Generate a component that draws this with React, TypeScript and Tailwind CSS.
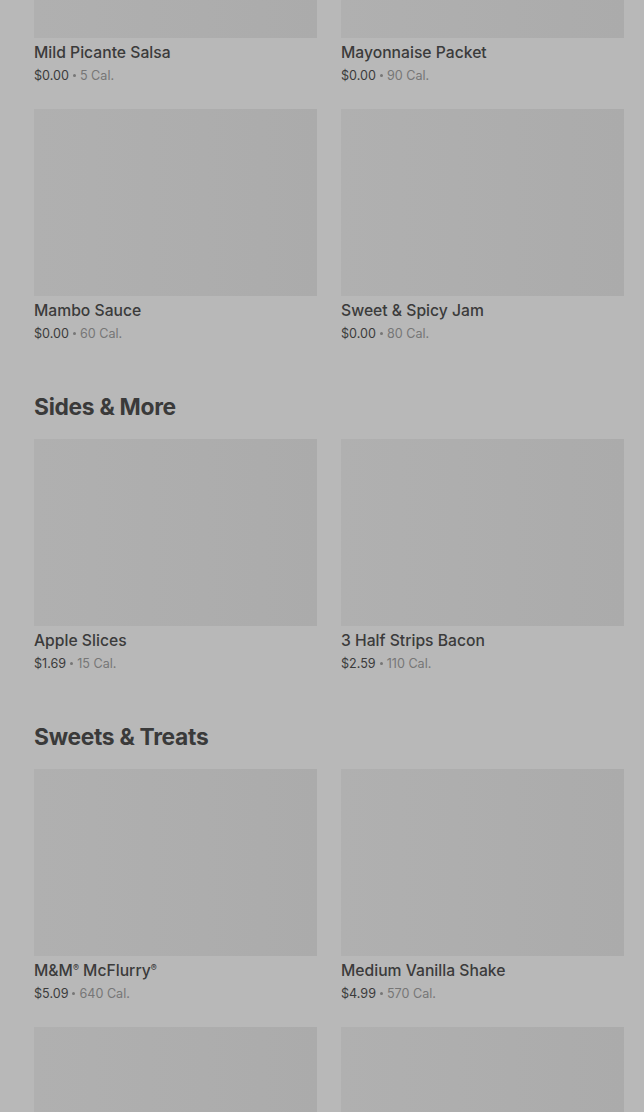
import React from 'react';

type Item = { name: React.ReactNode; price: string; cal: string };

const sections: { title?: string; items: Item[] }[] = [
  {
    items: [
      { name: 'Mild Picante Salsa', price: '$0.00', cal: '5 Cal.' },
      { name: 'Mayonnaise Packet', price: '$0.00', cal: '90 Cal.' },
      { name: 'Mambo Sauce', price: '$0.00', cal: '60 Cal.' },
      { name: 'Sweet & Spicy Jam', price: '$0.00', cal: '80 Cal.' },
    ],
  },
  {
    title: 'Sides & More',
    items: [
      { name: 'Apple Slices', price: '$1.69', cal: '15 Cal.' },
      { name: '3 Half Strips Bacon', price: '$2.59', cal: '110 Cal.' },
    ],
  },
  {
    title: 'Sweets & Treats',
    items: [
      {
        name: (
          <>
            M&M<sup className="text-[9px] -top-[5px]">®</sup> McFlurry<sup className="text-[9px] -top-[5px]">®</sup>
          </>
        ),
        price: '$5.09',
        cal: '640 Cal.',
      },
      { name: 'Medium Vanilla Shake', price: '$4.99', cal: '570 Cal.' },
      { name: '', price: '', cal: '' },
      { name: '', price: '', cal: '' },
    ],
  },
];

const Card: React.FC<{ item: Item }> = ({ item }) => (
  <div className="flex flex-col">
    <div className="h-[187px] bg-gradient-to-r from-[#b0b0b0] to-[#ababab]" />
    {item.price && (
      <>
        <div className="mt-[5px] h-5 leading-5 text-[15.7px] font-medium text-[#3b3b3b]">{item.name}</div>
        <div className="mt-[3px] h-[19px] leading-[19px] text-[12.6px] text-[#767676] flex items-center">
          <span className="text-[#3b3b3b]">{item.price}</span>
          <span className="mx-[4px] inline-block w-[3px] h-[3px] rounded-full bg-[#767676]" />
          {item.cal}
        </div>
      </>
    )}
  </div>
);

export default function App() {
  return (
    <div
      className="h-[1112px] w-[644px] overflow-hidden bg-[#b8b8b8]"
      style={{ fontFamily: 'Inter, "Noto Sans", sans-serif' }}
    >
      <div className="-mt-[149px] pl-[34px] pr-[20px]">
        {sections.map((s, i) => (
          <section key={i} className={s.title ? 'mt-[50px]' : ''}>
            {s.title && (
              <h2 className="h-7 leading-7 mb-[18px] text-[22.8px] font-bold text-[#3a3a3a] tracking-[-0.3px]">{s.title}</h2>
            )}
            <div className="grid grid-cols-2 gap-x-6 gap-y-6">
              {s.items.map((it, j) => (
                <Card key={j} item={it} />
              ))}
            </div>
          </section>
        ))}
      </div>
    </div>
  );
}
